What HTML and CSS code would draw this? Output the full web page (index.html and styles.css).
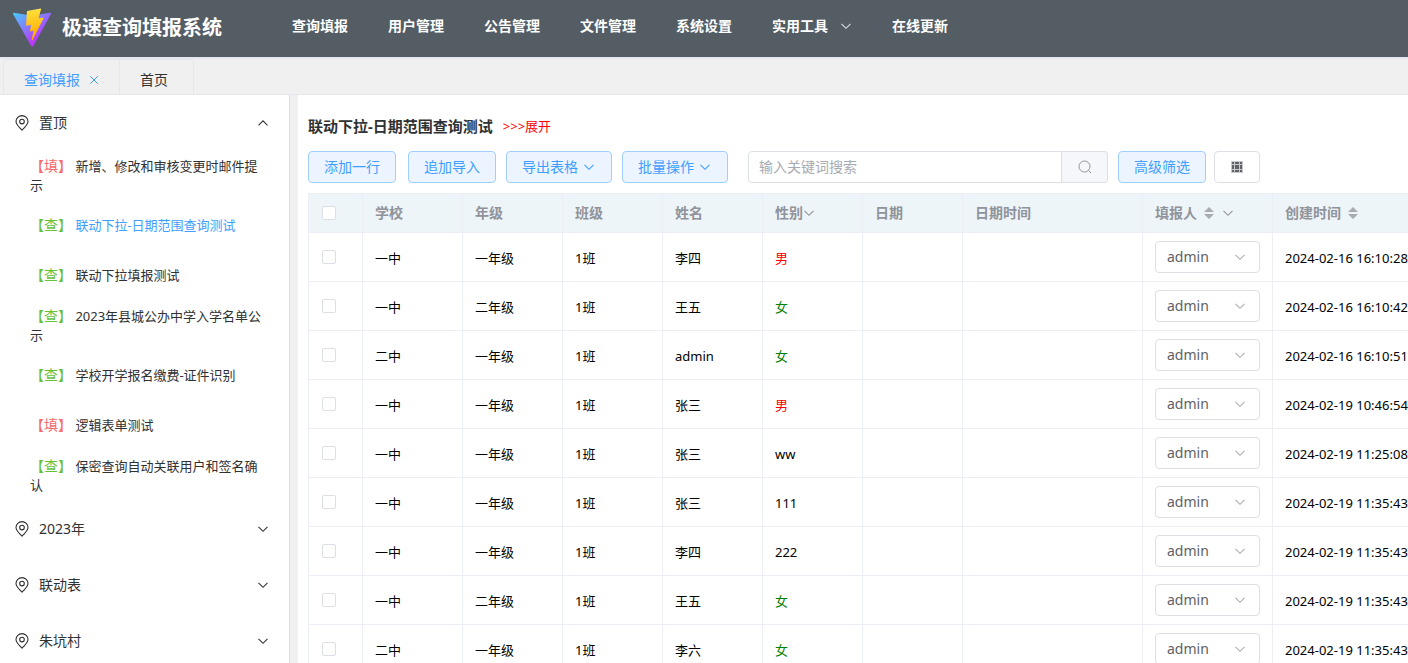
FILE: index.html
```html
<!DOCTYPE html>
<html lang="zh-CN">
<head>
<meta charset="utf-8">
<title>极速查询填报系统</title>
<link rel="stylesheet" href="styles.css">
</head>
<body>
<svg class="sprite" aria-hidden="true">
  <symbol id="down" viewBox="0 0 12 12"><path d="M1.500 3.800l4.500 4.500 4.500-4.500" fill="none" stroke="currentColor" stroke-width="1.100"/></symbol>
  <symbol id="up" viewBox="0 0 12 12"><path d="M1.500 8.300l4.500-4.500 4.500 4.500" fill="none" stroke="currentColor" stroke-width="1.100"/></symbol>
  <symbol id="close" viewBox="0 0 12 12"><path d="M2.200 2.200l7.600 7.600M9.800 2.200l-7.600 7.600" fill="none" stroke="currentColor"/></symbol>
  <symbol id="pin" viewBox="0 0 14 16"><path d="M7 15.200C3.200 11.600 1 9 1 6.600a6 6 0 0 1 12 0C13 9 10.800 11.600 7 15.200z" fill="none" stroke="currentColor" stroke-width="1.100"/><circle cx="7" cy="6.600" r="2.300" fill="none" stroke="currentColor" stroke-width="1.100"/></symbol>
  <symbol id="sort" viewBox="0 0 10 12"><path d="M0 5l5-5 5 5zM0 7h10l-5 5z" fill="#a8abb2"/></symbol>
</svg>

<header class="topbar">
  <div class="brand">
    <svg class="logo" viewBox="0 0 410 404" aria-hidden="true">
      <defs>
        <linearGradient id="violet" x1="6" y1="33" x2="235" y2="344" gradientUnits="userSpaceOnUse"><stop stop-color="#41d1ff"/><stop offset="1" stop-color="#bd34fe"/></linearGradient>
        <linearGradient id="amber" x1="194" y1="9" x2="236" y2="293" gradientUnits="userSpaceOnUse"><stop stop-color="#ffea83"/><stop offset=".083" stop-color="#ffdd35"/><stop offset="1" stop-color="#ffa800"/></linearGradient>
      </defs>
      <path d="M399.641 59.525L215.643 388.545C211.844 395.338 202.084 395.378 198.228 388.618L10.582 59.556C6.381 52.19 12.680 43.267 21.028 44.759L205.223 77.682C206.398 77.892 207.601 77.890 208.776 77.676L389.119 44.806C397.439 43.289 403.768 52.143 399.641 59.525Z" fill="url(#violet)"/>
      <path d="M292.965 1.574L156.801 28.255C154.563 28.694 152.906 30.590 152.771 32.866L144.395 174.330C144.198 177.662 147.258 180.248 150.510 179.498L188.420 170.749C191.967 169.931 195.172 173.055 194.443 176.622L183.180 231.775C182.422 235.487 185.907 238.661 189.532 237.560L212.947 230.446C216.577 229.344 220.065 232.527 219.297 236.242L201.398 322.875C200.278 328.294 207.486 331.249 210.492 326.603L212.500 323.500L323.454 102.072C325.312 98.365 322.108 94.137 318.036 94.923L279.014 102.454C275.347 103.161 272.227 99.746 273.262 96.158L298.731 7.867C299.767 4.273 296.636 .855 292.965 1.574Z" fill="url(#amber)"/>
    </svg>
    <h1>极速查询填报系统</h1>
  </div>
  <nav class="menu">
    <a href="#">查询填报</a>
    <a href="#">用户管理</a>
    <a href="#">公告管理</a>
    <a href="#">文件管理</a>
    <a href="#">系统设置</a>
    <a href="#">实用工具<svg class="i12"><use href="#down"/></svg></a>
    <a href="#">在线更新</a>
  </nav>
</header>

<div class="tabs">
  <a class="tab active" href="#">查询填报<svg class="i12"><use href="#close"/></svg></a>
  <a class="tab" href="#">首页</a>
</div>

<div class="layout">
  <aside class="sidebar">
    <button class="group" type="button"><svg class="pin"><use href="#pin"/></svg><span>置顶</span><svg class="i12"><use href="#up"/></svg></button>
    <ul class="items">
      <li><a href="#"><b class="fill">【填】</b> 新增、修改和审核变更时邮件提示</a></li>
      <li><a href="#" class="current"><b class="query">【查】</b> 联动下拉-日期范围查询测试</a></li>
      <li><a href="#"><b class="query">【查】</b> 联动下拉填报测试</a></li>
      <li><a href="#"><b class="query">【查】</b> 2023年县城公办中学入学名单公示</a></li>
      <li><a href="#"><b class="query">【查】</b> 学校开学报名缴费-证件识别</a></li>
      <li><a href="#"><b class="fill">【填】</b> 逻辑表单测试</a></li>
      <li><a href="#"><b class="query">【查】</b> 保密查询自动关联用户和签名确认</a></li>
    </ul>
    <button class="group" type="button"><svg class="pin"><use href="#pin"/></svg><span>2023年</span><svg class="i12"><use href="#down"/></svg></button>
    <button class="group" type="button"><svg class="pin"><use href="#pin"/></svg><span>联动表</span><svg class="i12"><use href="#down"/></svg></button>
    <button class="group" type="button"><svg class="pin"><use href="#pin"/></svg><span>朱坑村</span><svg class="i12"><use href="#down"/></svg></button>
  </aside>

  <main class="content">
    <div class="heading"><h2>联动下拉-日期范围查询测试</h2><a href="#">&gt;&gt;&gt;展开</a></div>
    <div class="toolbar">
      <div class="pair">
        <button class="btn" type="button">添加一行</button>
        <button class="btn" type="button">追加导入</button>
      </div>
      <button class="btn" type="button">导出表格<svg class="i12"><use href="#down"/></svg></button>
      <button class="btn" type="button">批量操作<svg class="i12"><use href="#down"/></svg></button>
      <form class="search">
        <input type="text" placeholder="输入关键词搜索" aria-label="输入关键词搜索">
        <button type="button" aria-label="搜索"><svg class="i14" viewBox="0 0 14 14"><circle cx="6.500" cy="6.500" r="5.500" fill="none" stroke="currentColor"/><path d="M10.500 10.500l2.500 2.500" stroke="currentColor"/></svg></button>
      </form>
      <div class="extra">
        <button class="btn" type="button">高级筛选</button>
        <button class="btn plain" type="button" aria-label="列设置"><svg class="i12" viewBox="0 0 12 12"><path fill="#c8c9cc" d="M0 0h12v12H0z"/><path fill="#606266" d="M1 1h2v2H1zM4 1h4v2H4zM9 1h2v2H9zM1 4h2v4H1zM4 4h4v4H4zM9 4h2v4H9zM1 9h2v2H1zM4 9h4v2H4zM9 9h2v2H9z"/></svg></button>
      </div>
    </div>
    <div class="table-wrap">
      <table>
        <colgroup><col class="c-check"><col class="c-text" span="6"><col class="c-time"><col class="c-user"><col class="c-time"></colgroup>
        <thead>
          <tr><th><input type="checkbox" aria-label="全选"></th><th>学校</th><th>年级</th><th>班级</th><th>姓名</th><th><span class="th">性别<svg class="i12"><use href="#down"/></svg></span></th><th>日期</th><th>日期时间</th><th><span class="th">填报人<svg class="sort"><use href="#sort"/></svg><svg class="i12"><use href="#down"/></svg></span></th><th><span class="th">创建时间<svg class="sort"><use href="#sort"/></svg></span></th></tr>
        </thead>
        <tbody>
          <tr><td class="control"><input type="checkbox" aria-label="选择"></td><td>一中</td><td>一年级</td><td>1班</td><td>李四</td><td class="male">男</td><td></td><td></td><td class="control"><span class="select"><select aria-label="填报人"><option>admin</option></select><svg class="i12"><use href="#down"/></svg></span></td><td>2024-02-16 16:10:28</td></tr>
          <tr><td class="control"><input type="checkbox" aria-label="选择"></td><td>一中</td><td>二年级</td><td>1班</td><td>王五</td><td class="female">女</td><td></td><td></td><td class="control"><span class="select"><select aria-label="填报人"><option>admin</option></select><svg class="i12"><use href="#down"/></svg></span></td><td>2024-02-16 16:10:42</td></tr>
          <tr><td class="control"><input type="checkbox" aria-label="选择"></td><td>二中</td><td>一年级</td><td>1班</td><td>admin</td><td class="female">女</td><td></td><td></td><td class="control"><span class="select"><select aria-label="填报人"><option>admin</option></select><svg class="i12"><use href="#down"/></svg></span></td><td>2024-02-16 16:10:51</td></tr>
          <tr><td class="control"><input type="checkbox" aria-label="选择"></td><td>一中</td><td>一年级</td><td>1班</td><td>张三</td><td class="male">男</td><td></td><td></td><td class="control"><span class="select"><select aria-label="填报人"><option>admin</option></select><svg class="i12"><use href="#down"/></svg></span></td><td>2024-02-19 10:46:54</td></tr>
          <tr><td class="control"><input type="checkbox" aria-label="选择"></td><td>一中</td><td>一年级</td><td>1班</td><td>张三</td><td>ww</td><td></td><td></td><td class="control"><span class="select"><select aria-label="填报人"><option>admin</option></select><svg class="i12"><use href="#down"/></svg></span></td><td>2024-02-19 11:25:08</td></tr>
          <tr><td class="control"><input type="checkbox" aria-label="选择"></td><td>一中</td><td>一年级</td><td>1班</td><td>张三</td><td>111</td><td></td><td></td><td class="control"><span class="select"><select aria-label="填报人"><option>admin</option></select><svg class="i12"><use href="#down"/></svg></span></td><td>2024-02-19 11:35:43</td></tr>
          <tr><td class="control"><input type="checkbox" aria-label="选择"></td><td>一中</td><td>一年级</td><td>1班</td><td>李四</td><td>222</td><td></td><td></td><td class="control"><span class="select"><select aria-label="填报人"><option>admin</option></select><svg class="i12"><use href="#down"/></svg></span></td><td>2024-02-19 11:35:43</td></tr>
          <tr><td class="control"><input type="checkbox" aria-label="选择"></td><td>一中</td><td>二年级</td><td>1班</td><td>王五</td><td class="female">女</td><td></td><td></td><td class="control"><span class="select"><select aria-label="填报人"><option>admin</option></select><svg class="i12"><use href="#down"/></svg></span></td><td>2024-02-19 11:35:43</td></tr>
          <tr><td class="control"><input type="checkbox" aria-label="选择"></td><td>二中</td><td>一年级</td><td>1班</td><td>李六</td><td class="female">女</td><td></td><td></td><td class="control"><span class="select"><select aria-label="填报人"><option>admin</option></select><svg class="i12"><use href="#down"/></svg></span></td><td>2024-02-19 11:35:43</td></tr>
        </tbody>
      </table>
    </div>
  </main>
</div>
</body>
</html>
```

FILE: styles.css
```css
* { box-sizing: border-box; }

body {
  display: flex;
  flex-direction: column;
  height: 100vh;
  margin: 0;
  overflow: hidden;
  background: #f0f0f0;
  color: #303133;
  font: 14px/20px "Noto Sans", "Noto Sans CJK SC", sans-serif;
}

a { color: inherit; text-decoration: none; }
button, input, select { font: inherit; color: inherit; }
button { cursor: pointer; }
svg { flex: none; }
.sprite { display: none; }
.i12 { width: 12px; height: 12px; }
.i14 { width: 14px; height: 14px; }

/* Top bar */
.topbar {
  display: flex;
  flex: none;
  height: 59px;
  padding: 0 12px 4px;
  background: #545c64;
  border-bottom: 2px solid #e4e7f2;
  color: #fff;
}
.brand { display: flex; align-items: center; gap: 10px; width: 260px; padding-top: 2px; }
.logo { width: 40px; height: 40px; }
h1 { margin: 0; font-size: 20px; line-height: 28px; font-weight: 700; }
.menu { display: flex; padding-bottom: 2px; }
.menu a { display: flex; align-items: center; gap: 12px; padding: 0 20px; font-weight: 700; }
.menu svg { color: #dcdfe6; }

/* Page tabs */
.tabs { display: flex; flex: none; height: 36px; padding-left: 3px; border-bottom: 1px solid #e4e7ed; }
.tab {
  display: flex;
  align-items: center;
  gap: 8px;
  padding: 6px 19px 0 20px;
  border: 1px solid #e4e7ed;
  border-width: 1px 1px 0 0;
}
.tab:first-child { border-left-width: 1px; border-radius: 4px 0 0 0; }
.tab:last-child { padding-right: 25px; border-radius: 0 4px 0 0; }
.tab.active { color: #409eff; }

/* Columns */
.layout { display: flex; flex: 1; min-height: 0; gap: 8px; }
.sidebar { flex: none; width: 290px; overflow: hidden; background: #fff; border-right: 1px solid #dcdfe6; }
.content { flex: 1; min-width: 0; padding: 18px 0 0 10px; overflow: hidden; background: #fff; }

.group {
  display: flex;
  align-items: center;
  width: 100%;
  height: 56px;
  padding: 0 20px 0 15px;
  border: 0;
  background: none;
  text-align: left;
}
.group span { flex: 1; padding-left: 10px; }
.pin { width: 14px; height: 16px; }
.items { margin: 0; padding: 0; list-style: none; }
.items li { display: flex; align-items: center; height: 50px; padding: 0 20px 2px 30px; font-size: 13px; line-height: 19px; }
.items b { font-size: 14px; font-weight: 400; }
.items .current { color: #409eff; }
.items .fill { color: #f56c6c; }
.items .query { color: #67c23a; }

/* Heading and toolbar */
.heading { display: flex; align-items: center; gap: 10px; height: 26px; }
.heading h2 { margin: 0; font-size: 15px; line-height: 24px; }
.heading a { color: red; font-size: 13px; }
.toolbar { display: flex; gap: 10px; margin: 12px 0 10px; }
.pair { display: flex; gap: 12px; }
.btn {
  display: flex;
  align-items: center;
  gap: 5px;
  height: 32px;
  padding: 0 15px;
  border: 1px solid #a0cfff;
  border-radius: 4px;
  background: #ecf5ff;
  color: #409eff;
  white-space: nowrap;
}
.toolbar > .btn { padding-right: 16px; }
.btn.plain { padding: 0 16px; border-color: #dcdfe6; background: #fff; }
.extra { display: flex; gap: 8px; }
.search { display: flex; width: 360px; margin-left: 10px; }
.search input {
  flex: 1;
  min-width: 0;
  padding: 0 10px;
  border: 1px solid #dcdfe6;
  border-radius: 4px 0 0 4px;
  background: #fff;
}
.search input::placeholder { color: #a8abb2; opacity: 1; }
.search button {
  display: flex;
  align-items: center;
  justify-content: center;
  width: 46px;
  border: 1px solid #dcdfe6;
  border-left: 0;
  border-radius: 0 4px 4px 0;
  background: #f5f7fa;
  color: #909399;
}

/* Data table */
.table-wrap { overflow: hidden; border: 1px solid #ebeef5; border-width: 1px 0 0 1px; }
table { width: 1144px; border-spacing: 0; table-layout: fixed; color: #000; font-size: 13px; }
.c-check { width: 54px; }
.c-text { width: 100px; }
.c-time { width: 180px; }
.c-user { width: 130px; }
th, td { padding: 0 12px; border: 1px solid #ebeef5; border-width: 0 1px 1px 0; text-align: left; white-space: nowrap; }
th { height: 39px; background: #eef5f9; color: #909399; font-size: 14px; }
td { height: 49px; padding-top: 2px; }
td.control { padding-top: 0; }
.th { display: flex; align-items: center; }
.sort { width: 10px; height: 12px; margin: 0 8px 0 7px; }
.male { color: red; }
.female { color: green; }

input[type="checkbox"] {
  display: block;
  width: 14px;
  height: 14px;
  margin: 0 1px;
  appearance: none;
  border: 1px solid #dcdfe6;
  border-radius: 2px;
  background: #fff;
}
.select { display: grid; align-items: center; }
.select > * { grid-area: 1 / 1; }
.select svg { justify-self: end; margin-right: 14px; color: #a8abb2; pointer-events: none; }
select {
  width: 100%;
  height: 32px;
  padding: 0 11px;
  appearance: none;
  border: 1px solid #dcdfe6;
  border-radius: 4px;
  background: #fff;
  color: #606266;
  font-size: 14px;
}
```
